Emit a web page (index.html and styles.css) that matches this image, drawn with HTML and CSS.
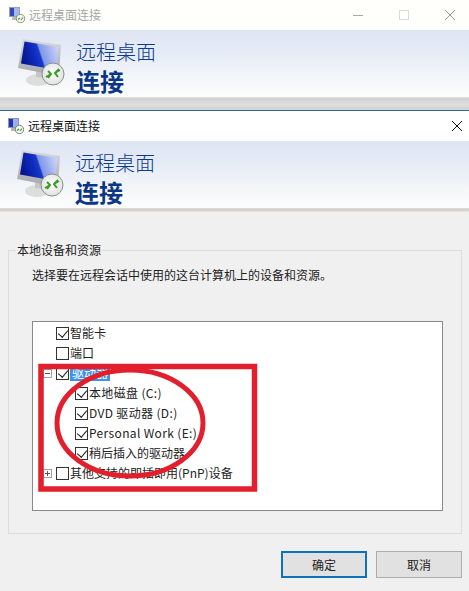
FILE: index.html
```html
<!DOCTYPE html>
<html lang="zh-CN">
<head>
    <meta charset="UTF-8">
    <meta name="viewport" content="width=device-width, initial-scale=1.0">
    <title>远程桌面连接</title>
    <link rel="stylesheet" href="styles.css">
</head>
<body>
    <svg class="defs" width="0" height="0">
        <defs>
            <linearGradient id="screen" gradientUnits="userSpaceOnUse" x1="4" y1="22" x2="40" y2="10">
                <stop offset="0" stop-color="#06148a"/>
                <stop offset="0.38" stop-color="#0f2cc0"/>
                <stop offset="0.5" stop-color="#1a3ac8"/>
                <stop offset="0.54" stop-color="#7f95e8"/>
                <stop offset="1" stop-color="#c9d5fa"/>
            </linearGradient>
            <linearGradient id="frame" x1="0" y1="0" x2="0" y2="1">
                <stop offset="0" stop-color="#d8dadd"/>
                <stop offset="1" stop-color="#a3a7ab"/>
            </linearGradient>
            <radialGradient id="disc" cx="0.5" cy="0.45" r="0.55">
                <stop offset="0" stop-color="#ffffff"/>
                <stop offset="1" stop-color="#dfe3dc"/>
            </radialGradient>
            <symbol id="monitor" viewBox="0 0 50 50">
                <ellipse cx="20" cy="41" rx="12" ry="6" fill="#dcdedd"/>
                <path d="M18 31 L28 33 L28 39 L18 38 Z" fill="#c4c7c9"/>
                <path d="M5 0 L43 6 L41 37 L0 29 Z" fill="url(#frame)"/>
                <path d="M6.500 2.500 L40 8 L38.500 31 L3 24.500 Z" fill="url(#screen)"/>
                <circle cx="35" cy="35" r="11" fill="url(#disc)" stroke="#8d8f8d" stroke-width="1"/>
                <path d="M28 38 L33 35 M30 32 L33 35 L30 39" fill="none" stroke="#3d9a2e" stroke-width="2"/>
                <path d="M42 31 L37 34 M40 38 L37 34 L41 30" fill="none" stroke="#3d9a2e" stroke-width="2"/>
            </symbol>
            <symbol id="appicon" viewBox="0 0 16 16">
                <rect x="0" y="0" width="11" height="10" fill="#8d97a8"/>
                <rect x="1" y="1" width="9" height="8" fill="#1f35b5"/>
                <rect x="5" y="1" width="5" height="8" fill="#9bb0ee"/>
                <rect x="3" y="10" width="6" height="3" fill="#b5b8bb"/>
                <circle cx="11.5" cy="11.5" r="4.2" fill="#f4f6f1" stroke="#62705f" stroke-width="0.8"/>
                <path d="M9 12.5 L11 11 M12 13 L14 10.5" stroke="#3d9a2e" stroke-width="1.2" fill="none"/>
            </symbol>
        </defs>
    </svg>

    <div class="window back">
        <div class="titlebar">
            <svg class="appicon"><use href="#appicon"/></svg>
            <span class="title">远程桌面连接</span>
            <div class="controls">
                <svg width="12" height="12" viewBox="0 0 12 12"><path d="M1 6.5 H11" stroke="#a8a8a8"/></svg>
                <svg width="12" height="12" viewBox="0 0 12 12"><rect x="1.5" y="1.5" width="9" height="9" fill="none" stroke="#dcdcdc"/></svg>
                <svg width="12" height="12" viewBox="0 0 12 12"><path d="M1 1 L11 11 M11 1 L1 11" stroke="#9a9a9a"/></svg>
            </div>
        </div>
        <div class="banner">
            <svg class="monitor"><use href="#monitor"/></svg>
            <div class="banner-text">
                <div class="banner-top">远程桌面</div>
                <div class="banner-main">连接</div>
            </div>
        </div>
        <div class="strip"></div>
    </div>

    <div class="window front">
        <div class="titlebar">
            <svg class="appicon"><use href="#appicon"/></svg>
            <span class="title">远程桌面连接</span>
            <svg class="close" width="12" height="12" viewBox="0 0 12 12"><path d="M1 1 L11 11 M11 1 L1 11" stroke="#111"/></svg>
        </div>
        <div class="banner">
            <svg class="monitor"><use href="#monitor"/></svg>
            <div class="banner-text">
                <div class="banner-top">远程桌面</div>
                <div class="banner-main">连接</div>
            </div>
        </div>
        <div class="rule"></div>

        <div class="content">
            <fieldset class="group">
                <legend>本地设备和资源</legend>
                <p class="desc">选择要在远程会话中使用的这台计算机上的设备和资源。</p>
                <div class="tree">
                    <div class="row"><span class="check on"></span><span class="label">智能卡</span></div>
                    <div class="row"><span class="check"></span><span class="label">端口</span></div>
                    <div class="row">
                        <span class="expander minus"></span>
                        <span class="check on"></span><span class="label selected">驱动器</span>
                    </div>
                    <div class="row child"><span class="check on"></span><span class="label wide">本地磁盘 (C:)</span></div>
                    <div class="row child"><span class="check on"></span><span class="label wide">DVD 驱动器 (D:)</span></div>
                    <div class="row child"><span class="check on"></span><span class="label wide">Personal Work (E:)</span></div>
                    <div class="row child"><span class="check on"></span><span class="label">稍后插入的驱动器</span></div>
                    <div class="row">
                        <span class="expander plus"></span>
                        <span class="check"></span><span class="label">其他支持的即插即用(PnP)设备</span>
                    </div>
                </div>
            </fieldset>
            <div class="buttons">
                <button class="btn default">确定</button>
                <button class="btn">取消</button>
            </div>
        </div>
    </div>

    <!-- red annotation drawn over the screenshot -->
    <svg class="markup" width="469" height="591" viewBox="0 0 469 591">
        <rect x="41" y="366.5" width="213.500" height="122.500" fill="none" stroke="#e21f2d" stroke-width="5.500"/>
        <ellipse cx="130" cy="423" rx="73" ry="53" fill="none" stroke="#e21f2d" stroke-width="5"/>
    </svg>
</body>
</html>
```

FILE: styles.css
```css
* {
    box-sizing: border-box;
}
html, body {
    height: 100%;
}
body {
    margin: 0;
    position: relative;
    overflow: hidden;
    background-color: #f0f0f0;
    font-family: "Noto Sans CJK SC", "Noto Sans", sans-serif;
    font-size: 12px;
    color: #1c1c1c;
}
.defs {
    display: block;
    height: 0;
}
.titlebar {
    height: 30px;
    display: flex;
    align-items: center;
    background-color: #fffffc;
}
.back .titlebar {
    padding-left: 9px;
    color: #a6a6a6;
}
.front .titlebar {
    height: 30px;
    padding-left: 8px;
    color: #111;
    background-color: #fff;
}
.appicon {
    width: 16px;
    height: 16px;
    margin-right: 4px;
}
.title {
    font-size: 12px;
    line-height: 16px;
}
.back .appicon {
    opacity: 0.9;
}
.controls {
    margin-left: auto;
    margin-right: 13px;
    display: flex;
    gap: 34px;
}
.close {
    margin-left: auto;
    margin-right: 6px;
}
.banner {
    height: 67px;
    display: flex;
    align-items: center;
    padding-left: 18px;
    background: linear-gradient(#dee5f3, #e6ecf6 35%, #fafbfb 90%, #fdfdfd);
}
.front .banner {
    padding-left: 17px;
}
.monitor {
    width: 50px;
    height: 50px;
    margin-right: 8px;
}
.banner-text {
    display: flex;
    flex-direction: column;
    margin-top: 7px;
    color: #0d3a8c;
}
.banner-top {
    font-size: 20px;
    line-height: 28px;
    font-weight: 300;
}
.banner-main {
    font-size: 24px;
    line-height: 30px;
    font-weight: 700;
    color: #0b3585;
}
.strip {
    height: 14px;
    background: linear-gradient(#e4e3e1 0, #cfcecc 2px, #d9d9d8 4px, #dedede 8px, #d3d3d3 12px);
    border-bottom: 1px solid #2f6f8f;
}
.rule {
    height: 4px;
    background: linear-gradient(#e0dfdd, #cfcecc 50%, #e8e8e8);
}
.content {
    padding: 30px 7px 0 8px;
}
.group {
    margin: 0;
    height: 292px;
    padding: 0;
    border: 1px solid #dcdcdc;
    min-width: 0;
}
.group legend {
    margin-left: 7px;
    padding: 0 1px;
    font-size: 12px;
    line-height: 16px;
    color: #222;
}
.desc {
    margin: 9px 0 0 23px;
    font-size: 12px;
    line-height: 16px;
    color: #222;
}
.tree {
    margin: 38px 0 0 23px;
    width: 411px;
    height: 190px;
    padding-top: 1px;
    background-color: #fff;
    border: 1px solid #8a8a8a;
    position: relative;
}
.row {
    height: 20px;
    display: flex;
    align-items: center;
    padding-left: 23px;
}
.row.child {
    padding-left: 42px;
}
.check {
    flex: none;
    width: 13px;
    height: 13px;
    margin-right: 1px;
    border: 1px solid #333;
    background-color: #fff;
    position: relative;
}
.check.on::after {
    content: "";
    position: absolute;
    left: 3px;
    top: 0;
    width: 5px;
    height: 8px;
    border: solid #222;
    border-width: 0 1px 1px 0;
    transform: rotate(40deg);
}
.label {
    font-size: 12px;
    line-height: 16px;
    padding: 0;
    color: #222;
    white-space: nowrap;
}
.label.wide {
    letter-spacing: 0.35px;
}
.label.selected {
    background-color: #3f92e6;
    color: #fff;
    padding: 0 2px;
}
.expander {
    position: absolute;
    left: 10px;
    width: 9px;
    height: 9px;
    border: 1px solid #a0a0a0;
    background-color: #fff;
}
.expander::before {
    content: "";
    position: absolute;
    left: 1px;
    top: 3px;
    width: 5px;
    height: 1px;
    background-color: #555;
}
.expander.plus::after {
    content: "";
    position: absolute;
    left: 3px;
    top: 1px;
    width: 1px;
    height: 5px;
    background-color: #555;
}
.buttons {
    display: flex;
    justify-content: flex-end;
    gap: 9px;
    margin-top: 17px;
}
.btn {
    width: 86px;
    height: 27px;
    padding: 0;
    font-family: inherit;
    font-size: 12px;
    color: #222;
    background-color: #e1e1e1;
    border: 1px solid #adadad;
}
.btn.default {
    border: 2px solid #0f72b8;
}
.markup {
    position: absolute;
    left: 0;
    top: 0;
}
```
